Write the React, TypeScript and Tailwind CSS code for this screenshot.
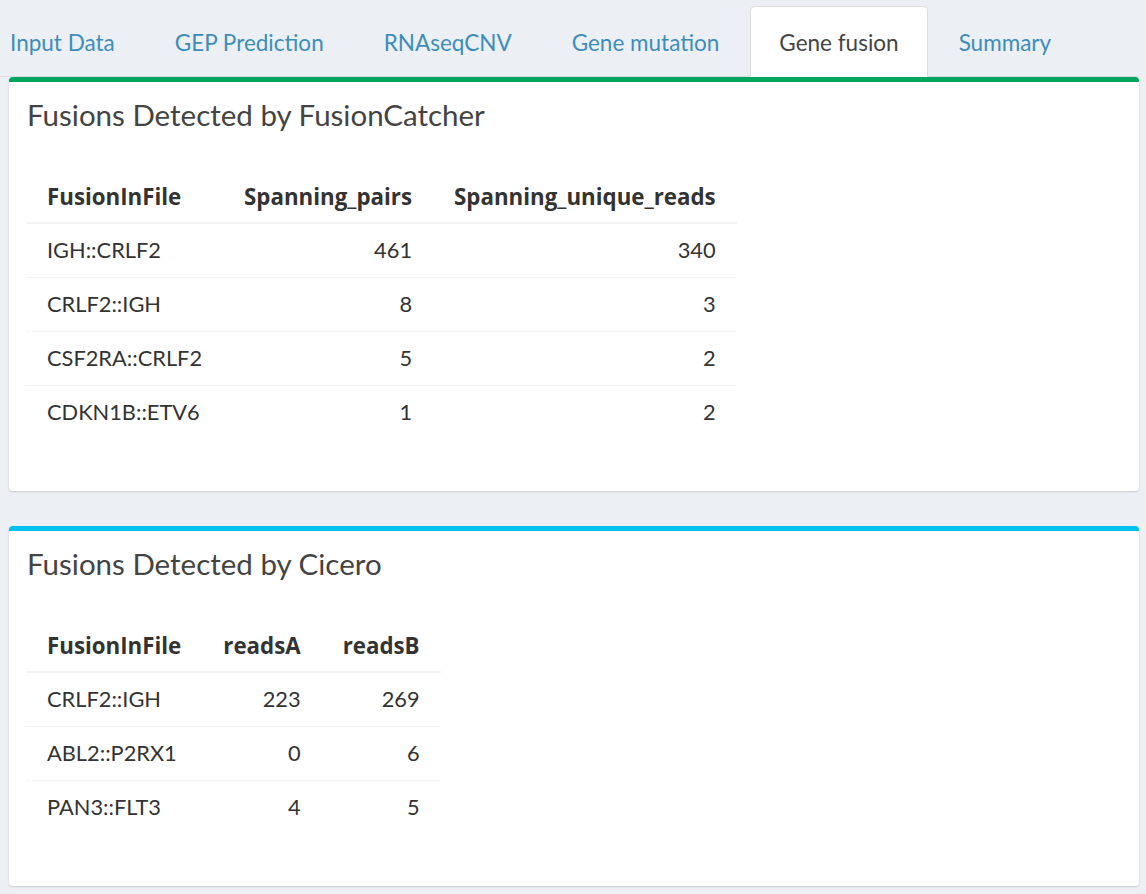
import React from 'react';

const tabs = ['Input Data', 'GEP Prediction', 'RNAseqCNV', 'Gene mutation', 'Gene fusion', 'Summary'];

const fusionCatcher = {
  columns: ['FusionInFile', 'Spanning_pairs', 'Spanning_unique_reads'],
  rows: [
    ['IGH::CRLF2', '461', '340'],
    ['CRLF2::IGH', '8', '3'],
    ['CSF2RA::CRLF2', '5', '2'],
    ['CDKN1B::ETV6', '1', '2'],
  ],
};

const cicero = {
  columns: ['FusionInFile', 'readsA', 'readsB'],
  rows: [
    ['CRLF2::IGH', '223', '269'],
    ['ABL2::P2RX1', '0', '6'],
    ['PAN3::FLT3', '4', '5'],
  ],
};

const DataTable: React.FC<{ data: { columns: string[]; rows: string[][] } }> = ({ data }) => (
  <table className="border-collapse text-[#333]">
    <thead>
      <tr className="border-b-2 border-[#f4f4f4]">
        {data.columns.map((c, i) => (
          <th
            key={c}
            className={`px-[21px] h-[51px] leading-[28px] text-[22.3px] font-bold ${i === 0 ? 'text-left' : 'text-right'}`}
            style={{ fontFamily: '"Open Sans", sans-serif' }}
          >
            {c}
          </th>
        ))}
      </tr>
    </thead>
    <tbody>
      {data.rows.map((r, ri) => (
        <tr key={ri} className={ri > 0 ? 'border-t border-[#f4f4f4]' : ''}>
          {r.map((v, i) => (
            <td
              key={i}
              className={`px-[21px] h-[54px] leading-[28px] text-[21.8px] ${i === 0 ? 'text-left' : 'text-right'}`}
            >
              {v}
            </td>
          ))}
        </tr>
      ))}
    </tbody>
  </table>
);

const Box: React.FC<{ title: string; color: string; children: React.ReactNode }> = ({ title, color, children }) => (
  <div className={`ml-[9px] bg-white rounded-[4px] border-t-[5px] ${color} shadow-[0_1px_2px_rgba(0,0,0,0.15)] px-[17px] pt-[17px] pb-[52px]`}>
    <h3 className="text-[29.5px] leading-[32px] text-[#444] pl-[1px]">{title}</h3>
    <div className="mt-[41px]">{children}</div>
  </div>
);

export default function App() {
  return (
    <div
      className="min-h-screen bg-[#ecf0f5] overflow-hidden pr-[7px] pb-[9px]"
      style={{ fontFamily: 'Lato, "Noto Sans", sans-serif' }}
    >
      <ul className="flex pt-[6px] ml-[-19px] border-b border-[#ddd]">
        {tabs.map((t) => {
          const active = t === 'Gene fusion';
          return (
            <li
              key={t}
              className={`mr-[2px] mb-[-1px] h-[71px] pt-[2px] px-[28px] flex items-center text-[22.5px] rounded-t-[5px] border ${
                active ? 'bg-white border-[#ddd] border-b-transparent text-[#444]' : 'border-transparent text-[#3c8dbc]'
              }`}
            >
              {t}
            </li>
          );
        })}
      </ul>
      <div className="flex flex-col gap-[35px]">
        <Box title="Fusions Detected by FusionCatcher" color="border-[#00a65a]">
          <DataTable data={fusionCatcher} />
        </Box>
        <Box title="Fusions Detected by Cicero" color="border-[#00c0ef]">
          <DataTable data={cicero} />
        </Box>
      </div>
    </div>
  );
}
